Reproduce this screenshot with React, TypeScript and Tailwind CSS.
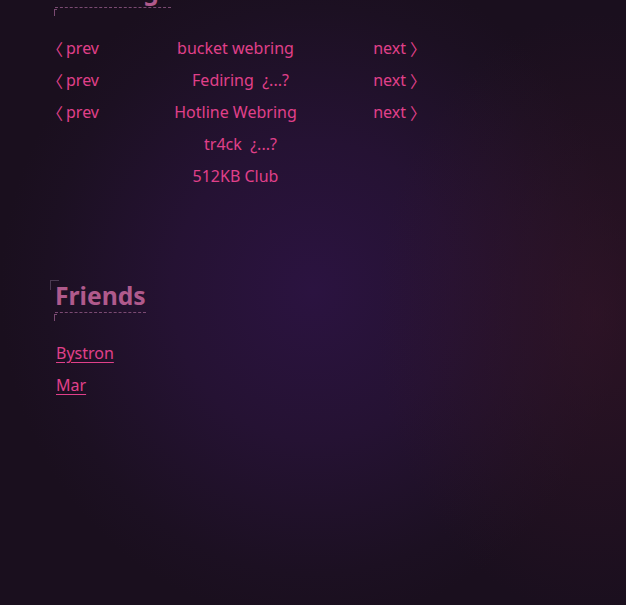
import React from "react";

function Heading({ children }: { children: React.ReactNode }) {
  return (
    <div className="relative inline-block">
      <span className="absolute left-[-5px] top-0 h-[10px] w-[9px] border-l border-t border-[#4a3a52]" />
      <h2 className="border-b border-dashed border-[#7a4a72] text-[24.7px] font-bold leading-[32px] text-[#b05a8c]">
        {children}
      </h2>
      <span className="absolute left-[-1px] top-full mt-[1px] h-[7px] w-[3px] border-l border-t border-[#7a4a72]" />
    </div>
  );
}

const rings: { name: string; extra?: boolean; nav: boolean }[] = [
  { name: "bucket webring", nav: true },
  { name: "Fediring", extra: true, nav: true },
  { name: "Hotline Webring", nav: true },
  { name: "tr4ck", extra: true, nav: false },
  { name: "512KB Club", nav: false },
];

const cjk = { fontFamily: '"Noto Sans CJK SC", sans-serif' };

export default function App() {
  return (
    <div
      className="relative h-screen w-full overflow-hidden bg-[#1c1020] bg-[radial-gradient(ellipse_35%_50%_at_95%_52%,rgba(58,22,42,0.55),transparent),radial-gradient(ellipse_50%_55%_at_50%_48%,#2b1340_0%,#251233_45%,#1c1022_85%,#1a0f1e_100%)]"
      style={{ fontFamily: '"Noto Sans", "DejaVu Sans", sans-serif' }}
    >
      <div className="-mt-[25px] pl-[55px]">
        <Heading>Webrings</Heading>
        <div className="mt-[24px] grid w-[361px] grid-cols-[1fr_auto_1fr] text-[16px] text-[#e0408a]">
          {rings.map((r, i) => (
            <React.Fragment key={i}>
              <div className="flex h-8 items-center pl-[1px]">
                {r.nav && (
                  <a href="#" className="flex items-center leading-6">
                    <span style={cjk} className="-ml-[9px] leading-6">〈</span>
                    <span className="ml-[3px]">prev</span>
                  </a>
                )}
              </div>
              <div className="flex h-8 items-center justify-center">
                {r.extra ? (
                  <span className="whitespace-pre pl-[10px]">
                    {r.name}
                    {"  "}¿...?
                  </span>
                ) : (
                  <span>{r.name}</span>
                )}
              </div>
              <div className="flex h-8 items-center justify-end">
                {r.nav && (
                  <a href="#" className="flex items-center leading-6">
                    <span>next</span>
                    <span style={cjk} className="-mr-[10px] ml-[4px] leading-6">〉</span>
                  </a>
                )}
              </div>
            </React.Fragment>
          ))}
        </div>

        <div className="mt-[88px]">
          <Heading>Friends</Heading>
        </div>
        <div className="mt-[24px] flex flex-col pl-[1px] text-[16px] text-[#e0408a]">
          <div className="flex h-8 items-center">
            <a href="#" className="underline underline-offset-[3px]">Bystron</a>
          </div>
          <div className="flex h-8 items-center">
            <a href="#" className="underline underline-offset-[3px]">Mar</a>
          </div>
        </div>
      </div>
    </div>
  );
}
